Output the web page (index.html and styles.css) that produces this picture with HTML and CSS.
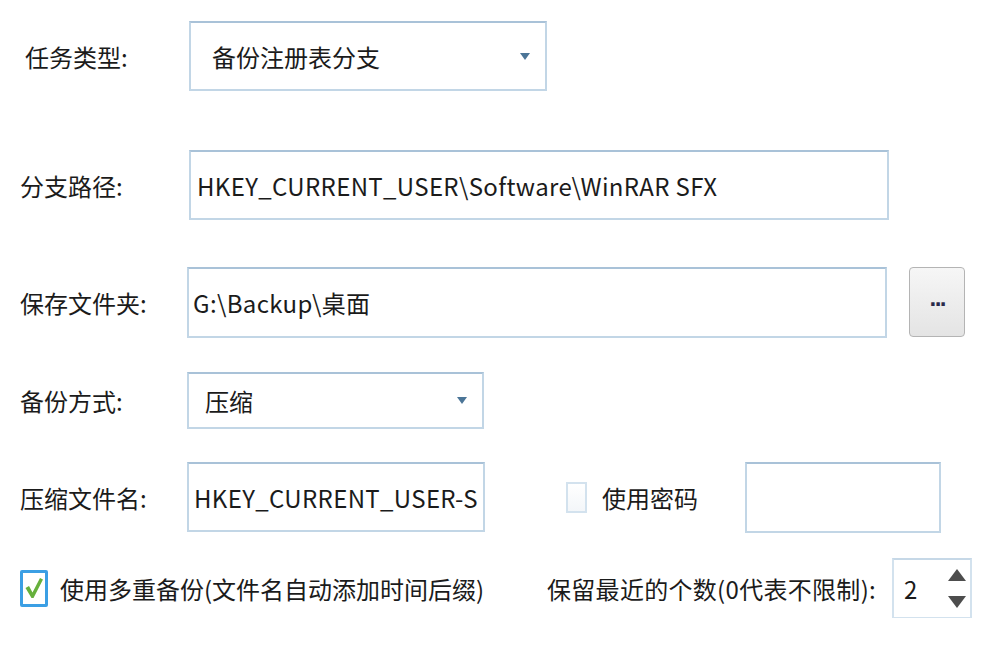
FILE: index.html
```html
<!DOCTYPE html>
<html lang="zh-CN">
<head>
    <meta charset="UTF-8">
    <title>备份任务</title>
    <link rel="stylesheet" href="styles.css">
</head>
<body>
    <div class="form">
        <div class="row row-type">
            <span class="label label-first">任务类型:</span>
            <div class="field select select-type">
                <span class="value">备份注册表分支</span>
                <span class="arrow"></span>
            </div>
        </div>

        <div class="row row-path">
            <span class="label">分支路径:</span>
            <div class="field text text-path">HKEY_CURRENT_USER\Software\WinRAR SFX</div>
        </div>

        <div class="row row-folder">
            <span class="label">保存文件夹:</span>
            <div class="field text text-folder">G:\Backup\桌面</div>
            <button class="browse">...</button>
        </div>

        <div class="row row-mode">
            <span class="label">备份方式:</span>
            <div class="field select select-mode">
                <span class="value">压缩</span>
                <span class="arrow"></span>
            </div>
        </div>

        <div class="row row-name">
            <span class="label">压缩文件名:</span>
            <div class="field text text-name">HKEY_CURRENT_USER-S</div>
            <label class="check check-pass"><span class="box"></span>使用密码</label>
            <div class="field text text-pass"></div>
        </div>

        <div class="row row-multi">
            <label class="check check-multi">
                <span class="box checked">
                    <svg width="20" height="24" viewBox="0 0 20 24"><path d="M1.5 12 L5 10 L8.5 16.5 L16 2 L19 3.5 L9.5 22 L7.5 22 Z" fill="#66b03c"/></svg>
                </span>
                使用多重备份(文件名自动添加时间后缀)
            </label>
            <span class="keep">保留最近的个数(0代表不限制):</span>
            <div class="spin">
                <span class="num">2</span>
                <span class="spin-btns">
                    <span class="up"></span>
                    <span class="down"></span>
                </span>
            </div>
        </div>
    </div>
</body>
</html>
```

FILE: styles.css
```css
*{
    margin: 0;
    padding: 0;
    box-sizing: border-box;
}
body{
    background: #ffffff;
    font-family: "Noto Sans CJK SC", "Noto Sans", sans-serif;
    font-size: 24px;
    color: #1b1b1b;
}
.form{
    padding-top: 21px;
}
.row{
    display: flex;
    align-items: center;
    padding-left: 20px;
}
.label{
    width: 167px;
    flex-shrink: 0;
}
.label-first{
    padding-left: 5px;
    width: 169px;
}
.field{
    border: 2px solid #c2d6e6;
    border-top-color: #a9c2d8;
    background: #ffffff;
    display: flex;
    align-items: center;
    white-space: nowrap;
    overflow: hidden;
}
.text{
    padding-left: 6px;
    letter-spacing: 0.35px;
}
.select{
    justify-content: space-between;
}
.arrow{
    width: 0;
    height: 0;
    border-left: 5px solid transparent;
    border-right: 5px solid transparent;
    border-top: 7px solid #4b7597;
}

.row-type{ height: 70px; }
.select-type{
    width: 358px;
    height: 70px;
    padding: 0 15px 0 21px;
}
.row-path{ height: 70px; margin-top: 59px; }
.text-path{
    width: 700px;
    height: 70px;
    margin-left: 2px;
}
.row-folder{ height: 70px; margin-top: 47px; }
.text-folder{
    width: 700px;
    height: 71px;
    padding-left: 4px;
}
.browse{
    width: 56px;
    height: 70px;
    margin-left: 22px;
    border: 1px solid #b4b4b4;
    border-radius: 4px;
    background: linear-gradient(#f6f6f6, #e4e4e4);
    font-family: "DejaVu Sans", sans-serif;
    font-size: 19px;
    font-weight: bold;
    color: #2a2a4a;
    letter-spacing: -2px;
    padding-bottom: 6px;
}
.row-mode{ height: 57px; margin-top: 35px; }
.select-mode{
    width: 297px;
    height: 57px;
    padding: 0 15px 0 16px;
}
.row-name{ height: 70px; margin-top: 33px; }
.text-name{
    width: 298px;
    height: 70px;
    padding-left: 5px;
}
.check{
    display: flex;
    align-items: center;
}
.check-pass{
    margin-left: 81px;
    gap: 15px;
}
.check-pass .box{
    width: 21px;
    height: 31px;
    border: 2px solid #d3e2ee;
    background: linear-gradient(#ffffff, #f3f6f9);
}
.text-pass{
    width: 196px;
    height: 71px;
    margin-left: 47px;
}
.row-multi{ height: 60px; margin-top: 26px; }
.check-multi{
    gap: 12px;
    width: 527px;
}
.box.checked{
    width: 28px;
    height: 37px;
    border: 3px solid #3b9fe4;
    border-radius: 2px;
    background: #ffffff;
    display: flex;
    align-items: center;
    justify-content: center;
}
.keep{
    letter-spacing: 0.3px;
    width: 345px;
}
.spin{
    width: 80px;
    height: 61px;
    border: 2px solid #d3e2ee;
    border-top-color: #c6d8e7;
    display: flex;
    align-items: center;
    justify-content: space-between;
    padding: 0 4px 0 10px;
}
.spin-btns{
    display: flex;
    flex-direction: column;
    gap: 15px;
}
.up{
    width: 0;
    height: 0;
    border-left: 9px solid transparent;
    border-right: 9px solid transparent;
    border-bottom: 12px solid #4d4d4d;
}
.down{
    width: 0;
    height: 0;
    border-left: 9px solid transparent;
    border-right: 9px solid transparent;
    border-top: 12px solid #4d4d4d;
}
```
